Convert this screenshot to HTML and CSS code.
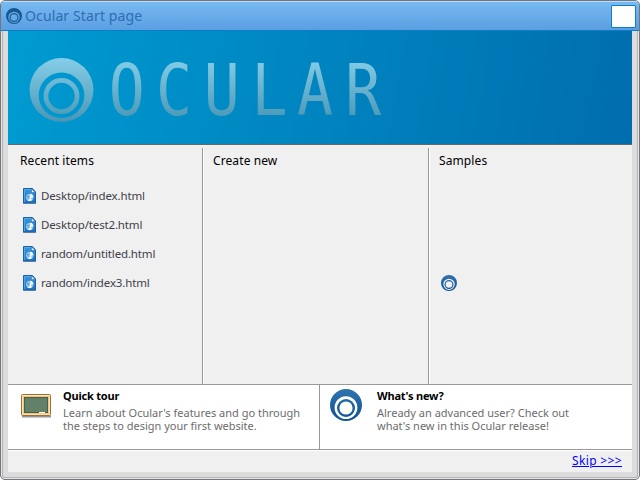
FILE: index.html
```
<!DOCTYPE html>
<html lang="en">
<head>
<meta charset="utf-8">
<title>Ocular Start page</title>
<link rel="stylesheet" href="styles.css">
</head>
<body>
<svg class="defs" width="0" height="0" aria-hidden="true">
  <defs>
    <linearGradient id="ring" x1="0" y1="0" x2="0" y2="1"><stop offset="0" stop-color="#2f73ad"/><stop offset="1" stop-color="#0e5296"/></linearGradient>
    <linearGradient id="logo-eye" x1="0" y1="0" x2="0" y2="1"><stop offset="0" stop-color="#86cee8"/><stop offset="1" stop-color="#4896b6"/></linearGradient>
    <linearGradient id="page" x1="0" y1="0" x2="0" y2="1"><stop offset="0" stop-color="#3b97dc"/><stop offset="1" stop-color="#1e6fbd"/></linearGradient>
    <symbol id="eye" viewBox="0 0 64 64">
      <path fill-rule="evenodd" d="M32 0a32 32 0 1 1 0 64a32 32 0 0 1 0-64zM32 14.500a22.800 22.800 0 1 0 0 45.600a22.800 22.800 0 0 0 0-45.600zM32 20a18 18 0 1 1 0 36a18 18 0 0 1 0-36zM32 24.800a13.200 13.200 0 1 0 0 26.400a13.200 13.200 0 0 0 0-26.400z"/>
    </symbol>
    <symbol id="file" viewBox="0 0 13 16">
      <path d="M0 15.500h13" stroke="#9b9b9b"/>
      <path d="M.5.500h9l3 3.500v11H.5z" fill="url(#page)" stroke="#1762aa"/>
      <path d="M1.500 14V1.500h7" fill="none" stroke="#62b3ed" stroke-width=".7"/>
      <path d="M8.500 1v3.500H12z" fill="#fff" stroke="#1762aa" stroke-width=".5"/>
      <circle cx="6.700" cy="9.500" r="3.700" fill="#8cc6ee"/>
      <path d="M7 5.800c2.500 0 3.500 2 3.400 3.700l-1.400-.5-1 1.200.8 1.800-1.600 1.100c-1 0-2.200-.4-2.800-1l1.800-.6-.4-1.700 1.800-1.500z" fill="#fff"/>
      <path d="M4 8.500l1.500.2.800 1.600-1 1" fill="none" stroke="#288bd4" stroke-width=".9"/>
    </symbol>
  </defs>
</svg>
<div class="window">
  <header class="titlebar">
    <svg class="title-icon"><use href="#eye"/></svg>
    <h1>Ocular Start page</h1>
    <button class="close" aria-label="Close"></button>
  </header>
  <div class="client">
    <div class="banner">
      <svg width="624" height="113" viewBox="8 31 624 113">
        <defs><linearGradient id="logo" gradientUnits="userSpaceOnUse" x1="0" y1="58" x2="0" y2="121"><stop offset="0" stop-color="#86cee8"/><stop offset="1" stop-color="#4896b6"/></linearGradient></defs>
        <use href="#eye" fill="url(#logo-eye)" x="29" y="58" width="65" height="64"/>
        <text class="wordmark" fill="url(#logo)" transform="scale(.83 1)" y="115" x="131 188 245.500 303 357.800 416">OCULAR</text>
      </svg>
    </div>
    <main class="columns">
      <section class="recent">
        <h2>Recent items</h2>
        <ul>
          <li><svg><use href="#file"/></svg><span>Desktop/index.html</span></li>
          <li><svg><use href="#file"/></svg><span>Desktop/test2.html</span></li>
          <li><svg><use href="#file"/></svg><span>random/untitled.html</span></li>
          <li><svg><use href="#file"/></svg><span>random/index3.html</span></li>
        </ul>
      </section>
      <section class="create"><h2>Create new</h2></section>
      <section class="samples"><h2>Samples</h2><svg class="sample-icon"><use href="#eye"/></svg></section>
    </main>
    <div class="tips">
      <article class="tour">
        <svg class="board" viewBox="0 0 32 24">
          <path d="M2 22.500h29" stroke="#929298" stroke-width="2"/>
          <rect x="1.500" y=".5" width="29" height="21" rx="1" fill="#f5c77d" stroke="#997047"/>
          <rect x="2.500" y="1.500" width="27" height="19" fill="none" stroke="#ffe1a5"/>
          <rect x="4.500" y="3.500" width="23" height="15" fill="#63806a" stroke="#42614f"/>
          <path d="M19 18.500h6" stroke="#fff"/>
        </svg>
        <div><h3>Quick tour</h3><p><span>Learn about Ocular's features and go through</span><span>the steps to design your first website.</span></p></div>
      </article>
      <article class="news">
        <svg class="news-icon"><use href="#eye"/></svg>
        <div><h3>What's new?</h3><p><span>Already an advanced user? Check out</span><span>what's new in this Ocular release!</span></p></div>
      </article>
    </div>
    <footer><a href="#">Skip &gt;&gt;&gt;</a></footer>
  </div>
</div>
</body>
</html>
```
FILE: styles.css
```
* { box-sizing: border-box; }
body, h1, h2, h3, p, ul { margin: 0; padding: 0; }
body { width: 640px; height: 480px; overflow: hidden; background: #fff; font-family: "Noto Sans", "Open Sans", sans-serif; font-size: 12px; }
svg { display: block; flex: none; }
.defs { position: absolute; }
.window { width: 640px; height: 480px; border: 1px solid #74757e; border-radius: 5px; background: #dcdcdc; overflow: hidden; box-shadow: inset 0 0 0 1px #e5e5e5, inset 0 0 0 2px #b5b5b5; }
.titlebar { height: 30px; border-top: 1px solid #bddcf7; border-bottom: 1px solid #0c7fc2; background: linear-gradient(#78baf0, #5b9ee3); display: flex; align-items: center; padding: 0 3px 0 5px; }
.title-icon { width: 16px; height: 16px; fill: #155994; }
h1 { flex: 1; margin-left: 3px; font-size: 14px; line-height: 28px; font-weight: 400; letter-spacing: .12px; color: #2d6db2; }
.close { width: 25px; height: 23px; border: 1px solid #0c7fc2; border-radius: 1px; background: #fff; padding: 0; }
.client { margin: 0 7px; background: #f0f0f0; height: 441px; }
.banner { height: 114px; border-bottom: 1px solid #686868; background: linear-gradient(100deg, #009bd1, #006dae); }
.wordmark { font: 72px "DejaVu Sans Mono", monospace; }
.columns { height: 239px; padding-top: 3px; display: grid; grid-template-columns: 194px 226px 204px; }
.columns section { padding: 0 11px; }
.columns .recent { padding-left: 12px; }
.create, .samples { box-shadow: inset 1px 0 #999, inset 2px 0 #fff; }
h2 { font-size: 12px; line-height: 16px; margin-top: 5px; font-weight: 400; letter-spacing: .1px; color: #000; }
ul { list-style: none; margin-top: 12px; }
li { display: flex; align-items: center; height: 29px; color: #404048; white-space: nowrap; font-size: 11.500px; letter-spacing: -.15px; }
li svg { width: 13px; height: 16px; margin: 1px 5px 0 3px; }
.sample-icon { width: 16px; height: 16px; margin: 106px 0 0 2px; fill: url(#ring); }
.tips { height: 67px; border-top: 1px solid #999; border-bottom: 1px solid #fff; background: #fff; display: grid; grid-template-columns: 311px 313px; box-shadow: inset 0 -1px #999; }
article { display: flex; padding-top: 3px; white-space: nowrap; }
.news { border-left: 1px solid #999; margin-bottom: 1px; }
h3 { font-size: 11px; line-height: 16px; letter-spacing: -.2px; color: #000; }
p { margin-top: 3px; color: #6c6c6c; }
p span { display: block; font-size: 11px; line-height: 12.500px; }
.board { width: 32px; height: 24px; margin: 6px 11px 0 12px; }
.news-icon { width: 32px; height: 32px; margin: 1px 15px 0 10px; fill: url(#ring); }
footer { height: 21px; display: flex; justify-content: flex-end; padding-right: 10px; }
footer a { color: #00f; line-height: 20px; letter-spacing: .35px; }
```
